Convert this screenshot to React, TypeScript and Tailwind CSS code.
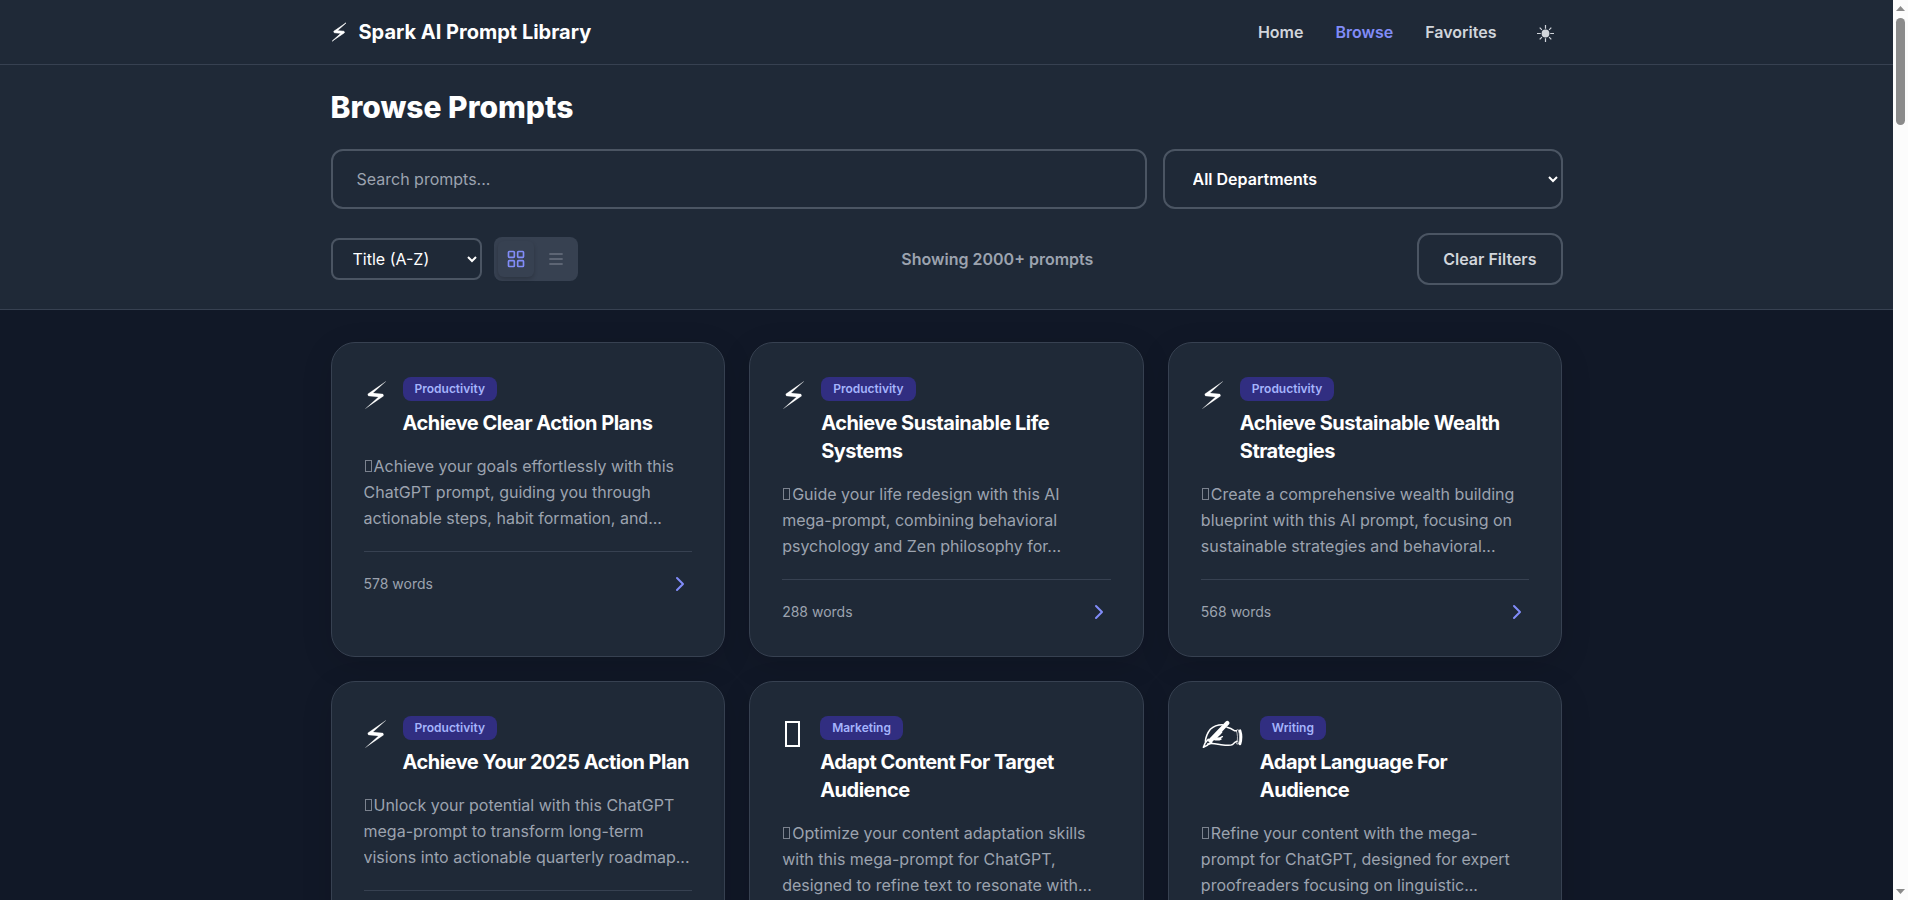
import { useState } from "react";

type IconName = "bolt" | "box" | "writing";

type Prompt = {
  icon: IconName;
  department: string;
  title: string;
  summary: string;
  words: number;
};

const prompts: Prompt[] = [
  {
    icon: "bolt",
    department: "Productivity",
    title: "Achieve Clear Action Plans",
    summary:
      "Achieve your goals effortlessly with this ChatGPT prompt, guiding you through actionable steps, habit formation, and...",
    words: 578,
  },
  {
    icon: "bolt",
    department: "Productivity",
    title: "Achieve Sustainable Life Systems",
    summary:
      "Guide your life redesign with this AI mega-prompt, combining behavioral psychology and Zen philosophy for...",
    words: 288,
  },
  {
    icon: "bolt",
    department: "Productivity",
    title: "Achieve Sustainable Wealth Strategies",
    summary:
      "Create a comprehensive wealth building blueprint with this AI prompt, focusing on sustainable strategies and behavioral...",
    words: 568,
  },
  {
    icon: "bolt",
    department: "Productivity",
    title: "Achieve Your 2025 Action Plan",
    summary:
      "Unlock your potential with this ChatGPT mega-prompt to transform long-term visions into actionable quarterly roadmap...",
    words: 412,
  },
  {
    icon: "box",
    department: "Marketing",
    title: "Adapt Content For Target Audience",
    summary:
      "Optimize your content adaptation skills with this mega-prompt for ChatGPT, designed to refine text to resonate with...",
    words: 365,
  },
  {
    icon: "writing",
    department: "Writing",
    title: "Adapt Language For Audience",
    summary:
      "Refine your content with the mega-prompt for ChatGPT, designed for expert proofreaders focusing on linguistic...",
    words: 340,
  },
];

function BoltIcon({ className, strokeWidth = 0.5 }: { className: string; strokeWidth?: number }) {
  return (
    <svg
      viewBox="0 7 69 108"
      className={className}
      fill="currentColor"
      stroke="currentColor"
      strokeWidth={strokeWidth}
      strokeLinejoin="round"
      aria-hidden="true"
    >
      <path d="M66 20L11 58l2 6 30 3L4 102 59 64l-2-6-30-3z" />
    </svg>
  );
}

function BoxIcon() {
  return (
    <svg viewBox="0 0 22 36" className="h-9 w-[22px]" fill="none" stroke="currentColor" strokeWidth="2" aria-hidden="true">
      <rect x="4" y="6" width="13" height="24" />
    </svg>
  );
}

function WritingIcon() {
  return (
    <svg
      viewBox="0 0 129 108"
      className="h-9 w-[43px]"
      fill="none"
      stroke="currentColor"
      strokeWidth="4.5"
      strokeLinejoin="round"
      strokeLinecap="round"
      aria-hidden="true"
    >
      <path d="M79 21L28 74" strokeWidth="13" />
      <path d="M22 70L13 80 7 94 20 87 32 79z" />
      <path d="M13 76C15 60 20 50 28 40 38 30 50 26 64 26" />
      <path d="M78 34C86 36 94 40 100 44L106 44" />
      <path d="M20 84C34 80 46 84 60 86 74 88 88 90 94 86 98 82 102 78 108 76" />
      <path d="M62 48C56 56 50 60 44 66 50 68 58 66 64 62M38 70C46 72 54 72 60 69" />
      <path d="M106 44C110 54 111 68 107 84L112 84C117 70 117 56 112 42z" strokeWidth="2" />
      <path d="M117 44C121 56 121 70 117 84" strokeWidth="8" />
    </svg>
  );
}

function CardIcon({ name }: { name: IconName }) {
  if (name === "bolt") return <BoltIcon className="h-9 w-[23px]" />;
  if (name === "box") return <BoxIcon />;
  return <WritingIcon />;
}

function SunIcon() {
  return (
    <svg viewBox="0 0 18 18" className="size-[18px]" fill="none" stroke="currentColor" strokeWidth="1.2" aria-hidden="true">
      <circle cx="8.5" cy="8.5" r="3.9" fill="currentColor" stroke="none" />
      <path d="M8.5 0v3.8M8.5 13.2V17M0 8.5h3.8M13.2 8.5H17M2.7 2.7l2.2 2.2M12.1 12.1l2.2 2.2M2.7 14.3l2.2-2.2M12.1 4.9l2.2-2.2" />
    </svg>
  );
}

function GridIcon() {
  return (
    <svg viewBox="0 0 24 24" className="size-5" fill="none" stroke="currentColor" strokeWidth="2" aria-hidden="true">
      <rect x="3" y="3" width="7" height="7" rx="1" />
      <rect x="14" y="3" width="7" height="7" rx="1" />
      <rect x="14" y="14" width="7" height="7" rx="1" />
      <rect x="3" y="14" width="7" height="7" rx="1" />
    </svg>
  );
}

function ListIcon() {
  return (
    <svg viewBox="0 0 24 24" className="size-5" fill="none" stroke="currentColor" strokeWidth="2" aria-hidden="true">
      <path d="M4 6h16M4 12h16M4 18h16" />
    </svg>
  );
}

function Header() {
  return (
    <header className="border-b border-[#374151] bg-[#1f2937]">
      <div className="mx-auto flex h-16 max-w-[1280px] items-center justify-between px-6">
        <a href="#home" className="flex items-center gap-3 text-xl font-bold text-white">
          <BoltIcon className="h-6 w-4" strokeWidth={3} />
          <span>Spark AI Prompt Library</span>
        </a>
        <nav className="flex items-center gap-8 font-semibold text-[#d1d5db]">
          <a href="#home">Home</a>
          <a href="#browse" className="text-[#818cf8]">Browse</a>
          <a href="#favorites">Favorites</a>
          <button type="button" aria-label="Toggle theme" className="px-2 pt-3 pb-2">
            <SunIcon />
          </button>
        </nav>
      </div>
    </header>
  );
}

function Filters() {
  const [view, setView] = useState("grid");
  const tab = "flex size-9 items-center justify-center rounded-md";
  const active = `${tab} text-[#818cf8] shadow-[0_2px_4px_rgba(0,0,0,0.2)]`;
  const idle = `${tab} text-[#6b7280]`;
  return (
    <section className="border-b border-[#374151] bg-[#1f2937]">
      <div className="mx-auto flex max-w-[1280px] flex-col gap-6 p-6">
        <h1 className="text-3xl leading-9 font-extrabold text-white">Browse Prompts</h1>
        <div className="grid grid-cols-3 gap-4">
          <input
            type="text"
            aria-label="Search prompts"
            placeholder="Search prompts..."
            className="col-span-2 h-15 rounded-xl border-2 border-[#4b5563] bg-[#1f2937] px-6 text-white placeholder:text-[#9ca3af]"
          />
          <select
            aria-label="Department"
            className="h-15 rounded-xl border-2 border-[#4b5563] bg-[#1f2937] px-6 font-semibold text-white"
          >
            <option>All Departments</option>
            <option>Marketing</option>
            <option>Productivity</option>
            <option>Writing</option>
          </select>
        </div>
        <div className="flex items-center justify-between">
          <div className="flex items-center gap-3">
            <select
              aria-label="Sort by"
              className="h-[42px] w-[151px] rounded-lg border-2 border-[#4b5563] bg-[#1f2937] px-4 text-white"
            >
              <option>Title (A-Z)</option>
              <option>Title (Z-A)</option>
            </select>
            <div className="flex gap-1 rounded-lg bg-[#374151] p-1">
              <button
                type="button"
                aria-label="Grid view"
                onClick={() => setView("grid")}
                className={view === "grid" ? active : idle}
              >
                <GridIcon />
              </button>
              <button
                type="button"
                aria-label="List view"
                onClick={() => setView("list")}
                className={view === "list" ? active : idle}
              >
                <ListIcon />
              </button>
            </div>
          </div>
          <p className="font-semibold text-[#9ca3af]">Showing 2000+ prompts</p>
          <button
            type="button"
            className="h-13 rounded-xl border-2 border-[#4b5563] px-6 font-semibold text-[#d1d5db]"
          >
            Clear Filters
          </button>
        </div>
      </div>
    </section>
  );
}

function PromptCard({ prompt }: { prompt: Prompt }) {
  return (
    <article className="rounded-3xl border border-[#374151] bg-[#1f2937] p-8 shadow-[0_8px_32px_rgba(0,0,0,0.12)]">
      <div className="flex items-start gap-4 pt-0.5">
        <span className="shrink-0 text-white">
          <CardIcon name={prompt.icon} />
        </span>
        <div className="min-w-0 flex-1">
          <span className="mb-2 block w-fit rounded-lg bg-[#312e81] px-3 py-1 text-xs font-semibold text-[#a5b4fc]">
            {prompt.department}
          </span>
          <h2 className="text-xl leading-7 font-bold tracking-tight text-white">{prompt.title}</h2>
        </div>
      </div>
      <p className="mt-4 mb-5 line-clamp-3 leading-[26px] text-[#9ca3af]">
        <span aria-hidden="true" className="mr-0.5 ml-px inline-block h-3 w-[7px] border border-[#7b828e]" />
        {prompt.summary}
      </p>
      <div className="flex items-center justify-between border-t border-[#374151] pt-5">
        <span className="text-sm text-[#9ca3af]">{prompt.words} words</span>
        <a href="#prompt" aria-label={`Open ${prompt.title}`} className="text-[#818cf8]">
          <svg viewBox="0 0 24 24" className="size-6" fill="none" stroke="currentColor" strokeWidth="2" aria-hidden="true">
            <path d="M9 6l6 6-6 6" strokeLinecap="round" strokeLinejoin="round" />
          </svg>
        </a>
      </div>
    </article>
  );
}

function ScrollRail() {
  return (
    <div aria-hidden="true" className="sticky top-0 flex h-screen w-[15px] shrink-0 flex-col items-center bg-[#fcfcfc] py-1.5">
      <svg viewBox="0 0 9 5" className="h-[5px] w-[9px] shrink-0 fill-[#8b8b8b]">
        <path d="M4.5 0L9 5H0z" />
      </svg>
      <div className="mt-[7px] h-[12%] w-[9px] rounded-full bg-[#8b8b8b]" />
      <svg viewBox="0 0 9 5" className="mt-auto h-[5px] w-[9px] shrink-0 fill-[#8b8b8b]">
        <path d="M0 0h9L4.5 5z" />
      </svg>
    </div>
  );
}

export default function App() {
  return (
    <div className="flex items-start bg-[#111827] font-['Inter',sans-serif] text-base">
      <div className="min-w-0 flex-1">
        <Header />
        <Filters />
        <main className="mx-auto grid max-w-[1280px] grid-cols-3 gap-6 px-6 py-8">
          {prompts.map((prompt) => (
            <PromptCard key={prompt.title} prompt={prompt} />
          ))}
        </main>
      </div>
      <ScrollRail />
    </div>
  );
}
